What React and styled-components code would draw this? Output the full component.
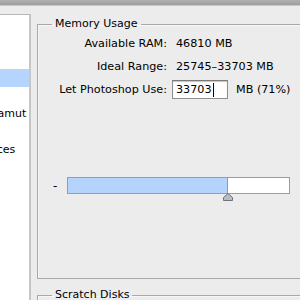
import React from "react";
import styled, { createGlobalStyle } from "styled-components";

const GlobalStyle = createGlobalStyle`
  html, body {
    margin: 0;
    padding: 0;
    background: #ececec;
  }
`;

const Window = styled.div`
  width: 300px;
  height: 300px;
  overflow: hidden;
  background: #ececec;
  font-family: "DejaVu Sans", "Liberation Sans", sans-serif;
  color: #000;
  display: flex;
  flex-direction: column;
`;

const TitleStrip = styled.div`
  height: 5px;
  flex: none;
  background: linear-gradient(#b0b0b0, #9e9e9e);
  border-bottom: 1px solid #c9c9c9;
`;

const Main = styled.div`
  flex: 1;
  display: flex;
  min-height: 0;
`;

const Sidebar = styled.div`
  width: 37px;
  flex: none;
  padding-top: 8px;
  box-sizing: border-box;
`;

const List = styled.ul`
  list-style: none;
  margin: 0;
  padding: 0;
  width: 31px;
  height: 100%;
  box-sizing: border-box;
  background: #fff;
  border-top: 1px solid #b8b8b8;
  border-right: 2px solid #c6c6c6;
  overflow: hidden;
`;

const ListItem = styled.li`
  height: 18px;
  line-height: 18px;
  font-size: 11px;
  white-space: nowrap;
  text-indent: -100px;
  background: ${(p) => (p.$selected ? "#b5d5ff" : "transparent")};
`;

const Content = styled.div`
  flex: 1;
  padding-top: 10px;
  display: flex;
  flex-direction: column;
  gap: 8px;
`;

const GroupBox = styled.fieldset`
  margin: 0;
  padding: 0;
  width: 280px;
  height: ${(p) => p.$height}px;
  box-sizing: border-box;
  flex: none;
  border: 1px solid #a9a9a9;
  border-right: none;
  box-shadow: inset 1px 1px 0 #f7f7f7;
`;

const Legend = styled.legend`
  margin-left: 14px;
  padding: 0 3px;
  font-size: 11px;
  line-height: 16px;
`;

const InfoGrid = styled.div`
  display: grid;
  grid-template-columns: 129px auto;
  grid-auto-rows: 23px;
  column-gap: 5px;
  align-items: center;
  font-size: 11.2px;
`;

const Label = styled.span`
  text-align: right;
`;

const Value = styled.span`
  padding-left: 4px;
`;

const InputRow = styled.div`
  display: flex;
  align-items: center;
  gap: 8px;
`;

const NumberField = styled.div`
  width: 56px;
  height: 19px;
  box-sizing: border-box;
  border: 1px solid #8f8f8f;
  border-top-color: #7a7a7a;
  box-shadow: inset 0 1px 1px #c4c4c4;
  background: #fff;
  display: flex;
  align-items: center;
  padding-left: 3px;
`;

const Caret = styled.span`
  width: 1px;
  height: 14px;
  background: #000;
  margin-left: 1px;
`;

const SliderRow = styled.div`
  margin-top: 76px;
  display: flex;
  align-items: center;
  padding-left: 15px;
  gap: 9px;
  font-size: 12px;
`;

const Minus = styled.span`
  width: 5px;
`;

const Track = styled.div`
  position: relative;
  width: 223px;
  height: 17px;
  box-sizing: border-box;
  border: 1px solid #9c9c9c;
  background: #fff;
`;

const Fill = styled.div`
  height: 100%;
  background: #b4d4fe;
  border-right: 1px solid #8a9bb0;
  box-sizing: border-box;
`;

const Thumb = styled.svg`
  position: absolute;
  top: 15px;
  transform: translateX(-5px);
`;

const prefs = [
  "General",
  "Interface",
  "File Handling",
  "Performance",
  "Cursors",
  "Transparency & Gamut",
  "Units & Rulers",
  "Guides, Grid & Slices",
  "Plug-Ins",
  "Type",
  "3D",
];

export default function App() {
  const pct = 72.2;
  return (
    <>
      <GlobalStyle />
      <Window>
        <TitleStrip />
        <Main>
          <Sidebar>
            <List>
              {prefs.map((p) => (
                <ListItem key={p} $selected={p === "Performance"}>
                  {p}
                </ListItem>
              ))}
            </List>
          </Sidebar>
          <Content>
            <GroupBox $height={263}>
              <Legend>Memory Usage</Legend>
              <InfoGrid>
                <Label>Available RAM:</Label>
                <Value>46810 MB</Value>
                <Label>Ideal Range:</Label>
                <Value>25745–33703 MB</Value>
                <Label>Let Photoshop Use:</Label>
                <InputRow>
                  <NumberField>
                    33703
                    <Caret />
                  </NumberField>
                  <span>MB (71%)</span>
                </InputRow>
              </InfoGrid>
              <SliderRow>
                <Minus>-</Minus>
                <Track>
                  <Fill style={{ width: `${pct}%` }} />
                  <Thumb width="10" height="8" viewBox="0 0 10 8" style={{ left: `${pct}%` }}>
                    <path d="M5 0.5 L9.5 4.5 V7.5 H0.5 V4.5 Z" fill="#b9bcc2" stroke="#6f737a" strokeWidth="1" />
                  </Thumb>
                </Track>
              </SliderRow>
            </GroupBox>
            <GroupBox $height={100}>
              <Legend>Scratch Disks</Legend>
            </GroupBox>
          </Content>
        </Main>
      </Window>
    </>
  );
}
